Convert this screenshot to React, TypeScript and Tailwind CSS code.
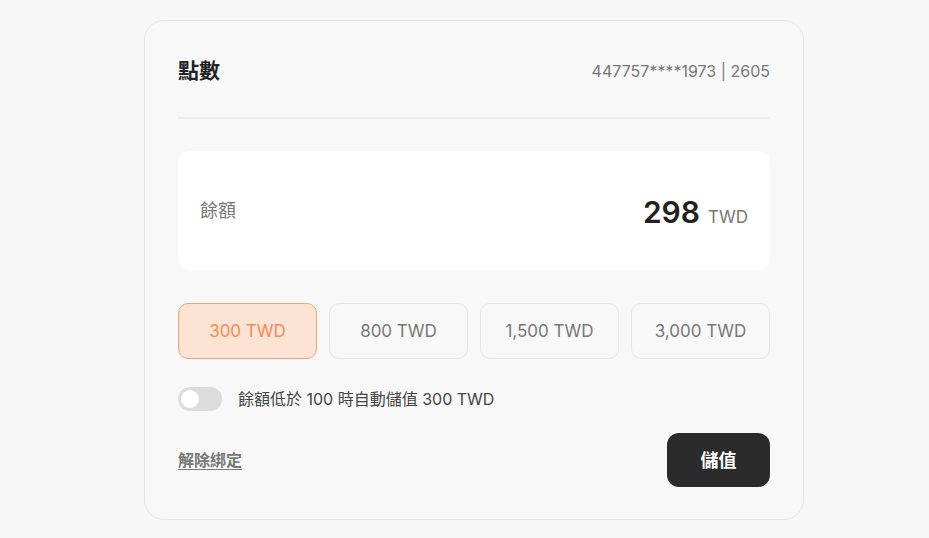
const amounts = ["300 TWD", "800 TWD", "1,500 TWD", "3,000 TWD"];

const App = () => {
  return (
    <div
      className="min-h-screen bg-[#f7f7f7] pt-[20px]"
      style={{ fontFamily: 'Inter, "Noto Sans CJK TC", sans-serif' }}
    >
      <div className="ml-[144px] w-[660px] rounded-[20px] border border-[#e6e6e6] bg-[#f8f8f8] px-[33px] pt-[33px] pb-[32px]">
        <div className="flex h-[34px] items-center justify-between">
          <h1 className="text-[21px] font-bold text-[#222]">點數</h1>
          <span className="text-[16px] text-[#777]">447757****1973 | 2605</span>
        </div>
        <div className="mt-[29px] h-[2px] bg-[#ebebeb]" />

        <div className="mt-[32px] flex h-[119px] items-center justify-between rounded-[12px] bg-white px-[22px]">
          <span className="text-[18px] text-[#777]">餘額</span>
          <div className="flex items-baseline gap-[8px] pt-[4px]">
            <span className="text-[30px] font-semibold text-[#222]">298</span>
            <span className="text-[17px] text-[#777]">TWD</span>
          </div>
        </div>

        <div className="mt-[33px] grid grid-cols-4 gap-[12px]">
          {amounts.map((a, i) => (
            <button
              key={a}
              className={
                i === 0
                  ? "h-[56px] rounded-[10px] border border-[#f5a56e] bg-[#fde3d3] pt-[2px] text-[17px] text-[#f08c55]"
                  : "h-[56px] rounded-[10px] border border-[#e6e6e6] bg-[#f8f8f8] pt-[2px] text-[17px] text-[#777]"
              }
            >
              {a}
            </button>
          ))}
        </div>

        <div className="mt-[28px] flex items-center gap-[16px]">
          <div className="flex h-[24px] w-[44px] items-center rounded-full bg-[#dcdcdc] px-[3px]">
            <div className="h-[18px] w-[18px] rounded-full bg-white" />
          </div>
          <span className="text-[16px] text-[#444]">餘額低於 100 時自動儲值 300 TWD</span>
        </div>

        <div className="mt-[22px] flex items-center justify-between">
          <a href="#" className="text-[16px] font-semibold text-[#777] underline underline-offset-[3px]">
            解除綁定
          </a>
          <button className="h-[54px] w-[103px] rounded-[12px] bg-[#2b2b2b] text-[18px] font-bold text-white">
            儲值
          </button>
        </div>
      </div>
    </div>
  );
};

export default App;
